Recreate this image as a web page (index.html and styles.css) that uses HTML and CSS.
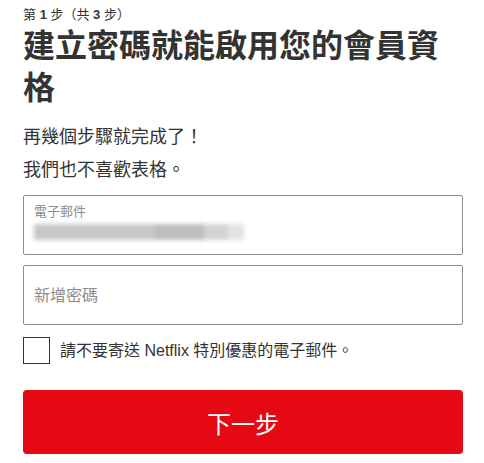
FILE: index.html
```html
<!DOCTYPE html>
<html lang="zh-Hant">
<head>
<meta charset="UTF-8">
<meta name="viewport" content="width=device-width, initial-scale=1.0">
<title>建立密碼</title>
<link rel="stylesheet" href="styles.css">
</head>
<body>
<div class="container">
  <span class="step-indicator">第 <b>1</b> 步（共 <b>3</b> 步）</span>
  <h1 class="step-title">建立密碼就能啟用您的會員資格</h1>
  <p class="context-body">再幾個步驟就完成了！</p>
  <p class="context-body">我們也不喜歡表格。</p>

  <div class="input-box filled">
    <label class="input-label" for="email">電子郵件</label>
    <div class="blurred-value" id="email">
      <span class="blk w1"></span><span class="blk w2"></span><span class="blk w3"></span><span class="blk w4"></span>
    </div>
  </div>

  <div class="input-box">
    <input type="password" id="password" class="input-field" placeholder="新增密碼">
  </div>

  <label class="checkbox-row">
    <span class="checkbox"></span>
    <span class="checkbox-text">請不要寄送 Netflix 特別優惠的電子郵件。</span>
  </label>

  <button class="next-button">下一步</button>
</div>
</body>
</html>
```

FILE: styles.css
```css
body {
  margin: 0;
  padding: 0;
  background-color: #fff;
  color: #333;
  font-family: "Liberation Sans", Arial, "Noto Sans CJK TC", sans-serif;
}
.container {
  width: 440px;
  margin-left: 23px;
  padding-top: 5px;
}
.step-indicator {
  display: block;
  font-size: 13px;
  line-height: 19px;
  color: #333;
}
.step-indicator b {
  font-weight: bold;
}
.step-title {
  font-size: 32px;
  font-weight: bold;
  line-height: 42px;
  margin: 1px 0 16px;
  color: #333;
}
.context-body {
  font-size: 18px;
  line-height: 24px;
  margin: 0 0 9px;
}
.input-box {
  box-sizing: border-box;
  height: 60px;
  border: 1px solid #8c8c8c;
  border-radius: 2px;
  margin-bottom: 10px;
  position: relative;
  display: flex;
  align-items: center;
  padding: 0 10px;
}
.context-body + .input-box {
  margin-top: 13px;
}
.input-box.filled {
  flex-direction: column;
  align-items: flex-start;
  justify-content: flex-start;
  padding-top: 7px;
}
.input-label {
  font-size: 13px;
  line-height: 17px;
  color: #8c8c8c;
}
.blurred-value {
  display: flex;
  margin-top: 4px;
  height: 16px;
  filter: blur(2px);
}
.blk {
  display: block;
  height: 16px;
  background-color: #c4c4c4;
}
.w1 { width: 120px; background-color: #c8c8c8; }
.w2 { width: 50px; background-color: #bdbdbd; }
.w3 { width: 25px; background-color: #d4d4d4; }
.w4 { width: 15px; background-color: #e4e4e4; }
.input-field {
  border: none;
  outline: none;
  width: 100%;
  font-size: 16px;
  padding: 0;
  margin-top: 2px;
  font-family: inherit;
  background: transparent;
}
.input-field::placeholder {
  color: #8c8c8c;
}
.checkbox-row {
  display: flex;
  align-items: center;
  margin-top: 12px;
  cursor: pointer;
}
.checkbox {
  box-sizing: border-box;
  width: 27px;
  height: 27px;
  border: 1px solid #333;
  margin-right: 10px;
  flex-shrink: 0;
}
.checkbox-text {
  font-size: 16px;
  line-height: 20px;
}
.next-button {
  display: block;
  width: 100%;
  height: 64px;
  margin-top: 26px;
  background-color: #e50914;
  color: #fff;
  border: none;
  border-radius: 4px;
  font-size: 24px;
  font-family: inherit;
  cursor: pointer;
}
```
